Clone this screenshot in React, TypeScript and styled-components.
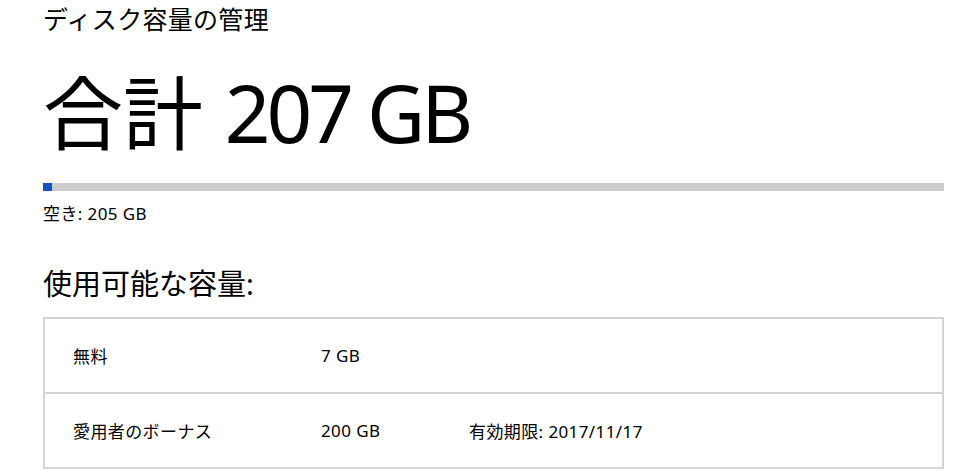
import React from "react";
import styled, { createGlobalStyle } from "styled-components";

// Global reset
const GlobalStyle = createGlobalStyle`
  html, body {
    margin: 0;
    padding: 0;
    background: #ffffff;
  }
  body {
    font-family: "Noto Sans", "Noto Sans CJK JP", sans-serif;
    color: #000000;
  }
`;

// Styled components
const Page = styled.div`
  padding: 0 28px 0 43px;
  width: 972px;
  height: 471px;
  box-sizing: border-box;
  overflow: hidden;
`;

const Title = styled.h1`
  margin: 0;
  font-size: 25px;
  font-weight: 400;
  line-height: 38px;
  letter-spacing: 0.3px;
`;

const Total = styled.div`
  margin-top: 26px;
  font-size: 80px;
  line-height: 96px;
  font-weight: 400;
`;

const Amount = styled.span`
  margin-left: 1px;
  letter-spacing: -4px;
`;

const Bar = styled.div`
  margin-top: 23px;
  height: 8px;
  background: #cccccc;
  display: flex;
`;

const BarFill = styled.div`
  height: 100%;
  background: #1a4fbb;
`;

const FreeText = styled.div`
  margin-top: 11px;
  font-size: 17px;
  line-height: 24px;
  letter-spacing: 0.4px;
`;

const SectionTitle = styled.h2`
  margin: 38px 0 0;
  font-size: 29px;
  font-weight: 400;
  line-height: 40px;
`;

const Table = styled.div`
  margin-top: 13px;
  border: 2px solid #d4d4d4;
`;

const Row = styled.div<{ $last?: boolean }>`
  display: grid;
  grid-template-columns: 248px 148px 1fr;
  align-items: center;
  height: 73px;
  padding-left: 28px;
  font-size: 17px;
  letter-spacing: 0.4px;
  border-bottom: ${(p) => (p.$last ? "none" : "2px solid #d4d4d4")};
`;

const Cell = styled.span`
  white-space: nowrap;
`;

const plans = [
  { name: "無料", size: "7 GB", note: "" },
  { name: "愛用者のボーナス", size: "200 GB", note: "有効期限: 2017/11/17" },
];

const used = 2;
const total = 207;

const App: React.FC = () => {
  return (
    <>
      <GlobalStyle />
      <Page>
        <Title>ディスク容量の管理</Title>
        <Total>
          合計 <Amount>{total} GB</Amount>
        </Total>
        <Bar>
          <BarFill style={{ width: `${Math.max((used / total) * 100, 0.9)}%` }} />
        </Bar>
        <FreeText>空き: {total - used} GB</FreeText>
        <SectionTitle>使用可能な容量:</SectionTitle>
        <Table>
          {plans.map((p, i) => (
            <Row key={p.name} $last={i === plans.length - 1}>
              <Cell>{p.name}</Cell>
              <Cell>{p.size}</Cell>
              <Cell>{p.note}</Cell>
            </Row>
          ))}
        </Table>
      </Page>
    </>
  );
};

export default App;
